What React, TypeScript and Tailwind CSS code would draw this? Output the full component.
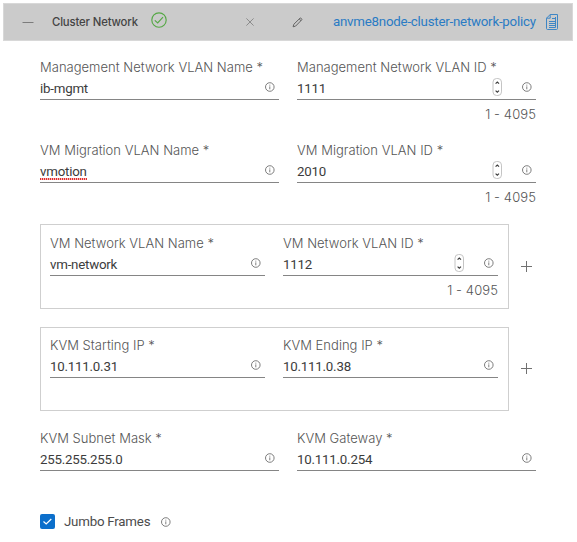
import type { ReactNode } from "react";

function InfoIcon() {
  return (
    <svg className="size-[10px] shrink-0" viewBox="0 0 10 10" fill="none" stroke="#6f6f6f" strokeWidth="0.9">
      <circle cx="4.8" cy="5" r="4.3" />
      <path d="M4.8 4.4V7.3M4.8 2.7V3.6" />
    </svg>
  );
}

function Stepper() {
  return (
    <svg className="h-[18px] w-[10px] shrink-0" viewBox="0 0 10 18" fill="none">
      <rect x="1" y="0.5" width="8.5" height="17" rx="3.6" fill="#fff" stroke="#c4c4c4" />
      <path d="M3.6 5.6L5.3 4L7 5.6M3.6 12.6L5.3 14.2L7 12.6" stroke="#3c3c3c" strokeWidth="1.2" />
    </svg>
  );
}

type FieldProps = {
  label: string;
  value: string;
  className: string;
  stepper?: boolean;
  misspelled?: boolean;
};

function Field({ label, value, className, stepper, misspelled }: FieldProps) {
  return (
    <div className={className}>
      <div className="h-[18px] text-[13px] leading-[18px] font-light tracking-[0.02px] whitespace-nowrap text-[#555]">{label} *</div>
      <div className="flex h-6 items-start border-b border-[#858585]">
        <span className="mt-[3px] flex h-[18px] flex-col font-[Roboto] text-[13.3px] leading-[19px] tracking-[-0.22px] text-[#3c3c3c]">
          <span className="h-4">{value}</span>
          {misspelled && (
            <span className="h-[1.5px] bg-[repeating-linear-gradient(90deg,#e02f2f_0_1px,#f7b5b5_1px_2px)]" />
          )}
        </span>
        <div className="mr-1 ml-auto flex h-[22px] items-center gap-[20px]">
          {stepper && <Stepper />}
          <InfoIcon />
        </div>
      </div>
      {stepper && <div className="h-[28px] text-right text-[13px] leading-[28px] font-light tracking-[0.1px] text-[#555]">1 - 4095</div>}
    </div>
  );
}

function Group({ children, className }: { children: ReactNode; className: string }) {
  return (
    <div className="flex items-center">
      <div className={className}>{children}</div>
      <svg className="ml-3 size-3" viewBox="0 0 12 12" stroke="#717171" strokeWidth="1">
        <path d="M0 5.5H11M5.5 0V11" />
      </svg>
    </div>
  );
}

export default function App() {
  return (
    <div className="h-[542px] w-[577px] overflow-hidden bg-white pt-[3px] pl-[3px] font-[Inter,sans-serif]">
      <header className="flex h-[38px] w-[570px] items-center border border-[#d8d8d8] bg-[#cbcbcb] pl-[18px]">
        <svg className="h-3 w-3" viewBox="0 0 12 12" stroke="#7c7c7c">
          <path d="M0.5 6.5H11.5" />
        </svg>
        <span className="ml-[18px] w-[86px] text-[11.3px] font-medium tracking-[-0.13px] whitespace-nowrap text-[#444]">Cluster Network</span>
        <svg className="mb-[5px] ml-[13px] size-4" viewBox="0 0 16 16" fill="none" stroke="#55a845" strokeWidth="1.15">
          <circle cx="8" cy="8" r="7.2" />
          <path d="M3.8 8.3L6.7 11L12 5.2" />
        </svg>
        <svg className="ml-[79px] size-2" viewBox="0 0 8 8" stroke="#858585" strokeWidth="0.9">
          <path d="M0.4 0.4L7.6 7.6M7.6 0.4L0.4 7.6" />
        </svg>
        <svg className="ml-[38px] size-[11px]" viewBox="0 0 11 11" fill="none" stroke="#626262" strokeWidth="1">
          <path d="M1.1 9.8L1.8 7.3L8 1.2Q8.7 0.8 9.3 1.4L9.6 1.7Q10.1 2.3 9.7 2.9L3.6 9.1ZM7.2 2L9 3.7" />
        </svg>
        <a className="ml-[30px] w-[204px] font-[Roboto] text-[13.3px] tracking-[-0.23px] whitespace-nowrap text-[#2a7bc4]">anvme8node-cluster-network-policy</a>
        <svg className="ml-[9px] h-4 w-3" viewBox="0 0 12 16" fill="none" stroke="#3e86c5" strokeWidth="1">
          <path d="M4.2 0.5H11.5V14.5Q11.4 15.5 10.5 15.5H1.5Q0.5 15.4 0.5 14.5V4.2ZM4.2 0.5V4.2H0.5M6 4.5H9.5M3 7.5H9.5M3 9.5H9.5M3 11.5H9.5M9.5 3V13.5H3" />
        </svg>
      </header>
      <main className="flex flex-col pt-[17px] pl-[37px]">
        <div className="flex h-[83px] gap-[18px]">
          <Field className="w-[239px]" label="Management Network VLAN Name" value="ib-mgmt" />
          <Field className="w-[239px]" label="Management Network VLAN ID" value="1111" stepper />
        </div>
        <div className="flex h-[83px] gap-[18px]">
          <Field className="w-[239px]" label="VM Migration VLAN Name" value="vmotion" misspelled />
          <Field className="w-[239px]" label="VM Migration VLAN ID" value="2010" stepper />
        </div>
        <Group className="flex h-[85px] w-[469px] gap-[18px] border border-[#cfcfcf] px-[9px] pt-[9px]">
          <Field className="w-[215px]" label="VM Network VLAN Name" value="vm-network" />
          <Field className="w-[215px]" label="VM Network VLAN ID" value="1112" stepper />
        </Group>
        <div className="h-[18px]" />
        <Group className="flex h-[84px] w-[469px] gap-[18px] border border-[#cfcfcf] px-[9px] pt-2">
          <Field className="w-[215px]" label="KVM Starting IP" value="10.111.0.31" />
          <Field className="w-[215px]" label="KVM Ending IP" value="10.111.0.38" />
        </Group>
        <div className="mt-[18px] flex gap-[18px]">
          <Field className="w-[239px]" label="KVM Subnet Mask" value="255.255.255.0" />
          <Field className="w-[239px]" label="KVM Gateway" value="10.111.0.254" />
        </div>
        <div className="mt-[43px] flex h-[15px] items-center">
          <svg className="size-[15px]" viewBox="0 0 15 15" fill="none">
            <rect width="15" height="15" rx="2" fill="#0c6fcb" />
            <path d="M3.5 7.5L6.2 10L11.3 5" stroke="#fff" strokeWidth="1.2" />
          </svg>
          <span className="ml-[9px] w-[86px] font-[Roboto] text-[13.3px] tracking-[-0.22px] whitespace-nowrap text-[#4c4c4c]">Jumbo Frames</span>
          <span className="ml-[11px]"><InfoIcon /></span>
        </div>
      </main>
    </div>
  );
}
